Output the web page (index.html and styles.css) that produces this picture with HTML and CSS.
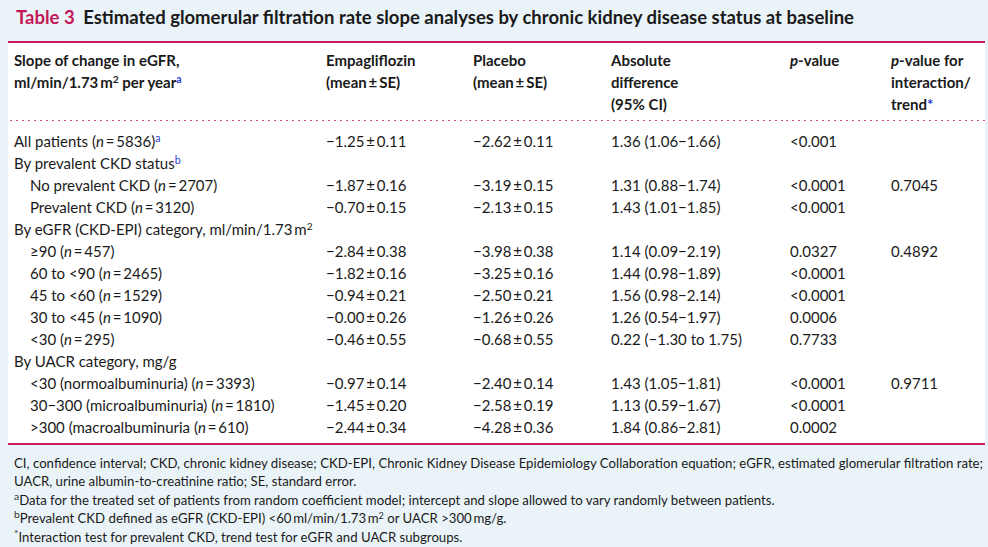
FILE: index.html
```html
<!DOCTYPE html>
<html>
<head>
<meta charset="utf-8">
<link rel="stylesheet" href="styles.css">
</head>
<body>
<div class="page">
  <h1 class="title"><span class="tnum">Table 3</span> Estimated glomerular filtration rate slope analyses by chronic kidney disease status at baseline</h1>
  <div class="panel">
    <table class="data">
      <colgroup>
        <col class="c1"><col class="c2"><col class="c3"><col class="c4"><col class="c5"><col class="c6">
      </colgroup>
      <thead>
        <tr>
          <th>Slope of change in eGFR,<br>ml/min/1.73&#8201;m<sup>2</sup> per year<sup class="fn">a</sup></th>
          <th>Empagliflozin<br>(mean&#8201;±&#8201;SE)</th>
          <th>Placebo<br>(mean&#8201;±&#8201;SE)</th>
          <th>Absolute<br>difference<br>(95% CI)</th>
          <th><i>p</i>-value</th>
          <th><i>p</i>-value for<br>interaction/<br>trend<span class="fn">*</span></th>
        </tr>
      </thead>
      <tbody>
        <tr class="first"><td>All patients (<i>n</i>&#8201;=&#8201;5836)<sup class="fn">a</sup></td><td>−1.25&#8201;±&#8201;0.11</td><td>−2.62&#8201;±&#8201;0.11</td><td>1.36 (1.06−1.66)</td><td>&lt;0.001</td><td></td></tr>
        <tr><td>By prevalent CKD status<sup class="fn">b</sup></td><td></td><td></td><td></td><td></td><td></td></tr>
        <tr><td class="sub">No prevalent CKD (<i>n</i>&#8201;=&#8201;2707)</td><td>−1.87&#8201;±&#8201;0.16</td><td>−3.19&#8201;±&#8201;0.15</td><td>1.31 (0.88−1.74)</td><td>&lt;0.0001</td><td>0.7045</td></tr>
        <tr><td class="sub">Prevalent CKD (<i>n</i>&#8201;=&#8201;3120)</td><td>−0.70&#8201;±&#8201;0.15</td><td>−2.13&#8201;±&#8201;0.15</td><td>1.43 (1.01−1.85)</td><td>&lt;0.0001</td><td></td></tr>
        <tr><td colspan="3">By eGFR (CKD-EPI) category, ml/min/1.73&#8201;m<sup>2</sup></td><td></td><td></td><td></td></tr>
        <tr><td class="sub">≥90 (<i>n</i>&#8201;=&#8201;457)</td><td>−2.84&#8201;±&#8201;0.38</td><td>−3.98&#8201;±&#8201;0.38</td><td>1.14 (0.09−2.19)</td><td>0.0327</td><td>0.4892</td></tr>
        <tr><td class="sub">60 to &lt;90 (<i>n</i>&#8201;=&#8201;2465)</td><td>−1.82&#8201;±&#8201;0.16</td><td>−3.25&#8201;±&#8201;0.16</td><td>1.44 (0.98−1.89)</td><td>&lt;0.0001</td><td></td></tr>
        <tr><td class="sub">45 to &lt;60 (<i>n</i>&#8201;=&#8201;1529)</td><td>−0.94&#8201;±&#8201;0.21</td><td>−2.50&#8201;±&#8201;0.21</td><td>1.56 (0.98−2.14)</td><td>&lt;0.0001</td><td></td></tr>
        <tr><td class="sub">30 to &lt;45 (<i>n</i>&#8201;=&#8201;1090)</td><td>−0.00&#8201;±&#8201;0.26</td><td>−1.26&#8201;±&#8201;0.26</td><td>1.26 (0.54−1.97)</td><td>0.0006</td><td></td></tr>
        <tr><td class="sub">&lt;30 (<i>n</i>&#8201;=&#8201;295)</td><td>−0.46&#8201;±&#8201;0.55</td><td>−0.68&#8201;±&#8201;0.55</td><td>0.22 (−1.30 to 1.75)</td><td>0.7733</td><td></td></tr>
        <tr><td>By UACR category, mg/g</td><td></td><td></td><td></td><td></td><td></td></tr>
        <tr><td class="sub">&lt;30 (normoalbuminuria) (<i>n</i>&#8201;=&#8201;3393)</td><td>−0.97&#8201;±&#8201;0.14</td><td>−2.40&#8201;±&#8201;0.14</td><td>1.43 (1.05−1.81)</td><td>&lt;0.0001</td><td>0.9711</td></tr>
        <tr><td class="sub">30−300 (microalbuminuria) (<i>n</i>&#8201;=&#8201;1810)</td><td>−1.45&#8201;±&#8201;0.20</td><td>−2.58&#8201;±&#8201;0.19</td><td>1.13 (0.59−1.67)</td><td>&lt;0.0001</td><td></td></tr>
        <tr class="last"><td class="sub">&gt;300 (macroalbuminuria (<i>n</i>&#8201;=&#8201;610)</td><td>−2.44&#8201;±&#8201;0.34</td><td>−4.28&#8201;±&#8201;0.36</td><td>1.84 (0.86−2.81)</td><td>0.0002</td><td></td></tr>
      </tbody>
    </table>
  </div>
  <div class="notes">
    <p class="just">CI, confidence interval; CKD, chronic kidney disease; CKD-EPI, Chronic Kidney Disease Epidemiology Collaboration equation; eGFR, estimated glomerular filtration rate;</p>
    <p>UACR, urine albumin-to-creatinine ratio; SE, standard error.</p>
    <p><sup class="nm">a</sup>Data for the treated set of patients from random coefficient model; intercept and slope allowed to vary randomly between patients.</p>
    <p><sup class="nm">b</sup>Prevalent CKD defined as eGFR (CKD-EPI) &lt;60&#8201;ml/min/1.73&#8201;m<sup>2</sup> or UACR &gt;300&#8201;mg/g.</p>
    <p><sup class="nm">*</sup>Interaction test for prevalent CKD, trend test for eGFR and UACR subgroups.</p>
  </div>
</div>
</body>
</html>
```

FILE: styles.css
```css
html, body {
  margin: 0;
  padding: 0;
  background: #eaf4f8;
}
body {
  font-family: "Lato", "Open Sans", sans-serif;
  color: #1a1a1a;
  width: 988px;
  height: 547px;
  overflow: hidden;
}
.page {
  padding: 0 3px 0 8px;
}
.title {
  margin: 0;
  padding: 6px 0 0 8px;
  height: 41px;
  box-sizing: border-box;
  font-size: 18.5px;
  line-height: 22px;
  font-weight: 700;
  color: #1a1a1a;
  white-space: nowrap;
}
.tnum {
  color: #c4175a;
  margin-right: 4px;
}
.panel {
  background: #fff;
  border-top: 2px solid #c81d5d;
  border-bottom: 2px solid #c81d5d;
}
.data {
  width: 100%;
  border-collapse: collapse;
  table-layout: fixed;
  font-size: 15px;
  line-height: 22px;
}
.c1 { width: 312px; }
.c2 { width: 147px; }
.c3 { width: 138px; }
.c4 { width: 179px; }
.c5 { width: 101px; }
.c6 { width: 100px; }
.data th, .data td {
  text-align: left;
  vertical-align: top;
  padding: 0 0 0 6px;
  white-space: nowrap;
}
.data th {
  font-weight: 700;
  padding-top: 6px;
  padding-bottom: 7px;
  background-image: radial-gradient(circle, #d5517f 0.8px, transparent 1.1px);
  background-size: 6px 3px;
  background-repeat: repeat-x;
  background-position: 0 bottom;
}
.data tr.first td { padding-top: 8px; }
.data tr.last td { padding-bottom: 5px; }
.data td.sub { padding-left: 22px; }
sup {
  font-size: 0.68em;
  line-height: 0;
  vertical-align: 0.5em;
}
.fn {
  color: #2b3ed6;
  font-weight: 400;
  font-size: 0.7em;
}
th .fn { font-weight: 700; }
th span.fn { font-size: 1em; }
.notes {
  padding: 9px 2px 0 6px;
  font-size: 13.2px;
  line-height: 18.4px;
}
.notes p {
  margin: 0;
  white-space: nowrap;
}
.notes p.just {
  text-align: justify;
  text-align-last: justify;
}
.nm {
  font-size: 0.78em;
  color: #333;
}
```
